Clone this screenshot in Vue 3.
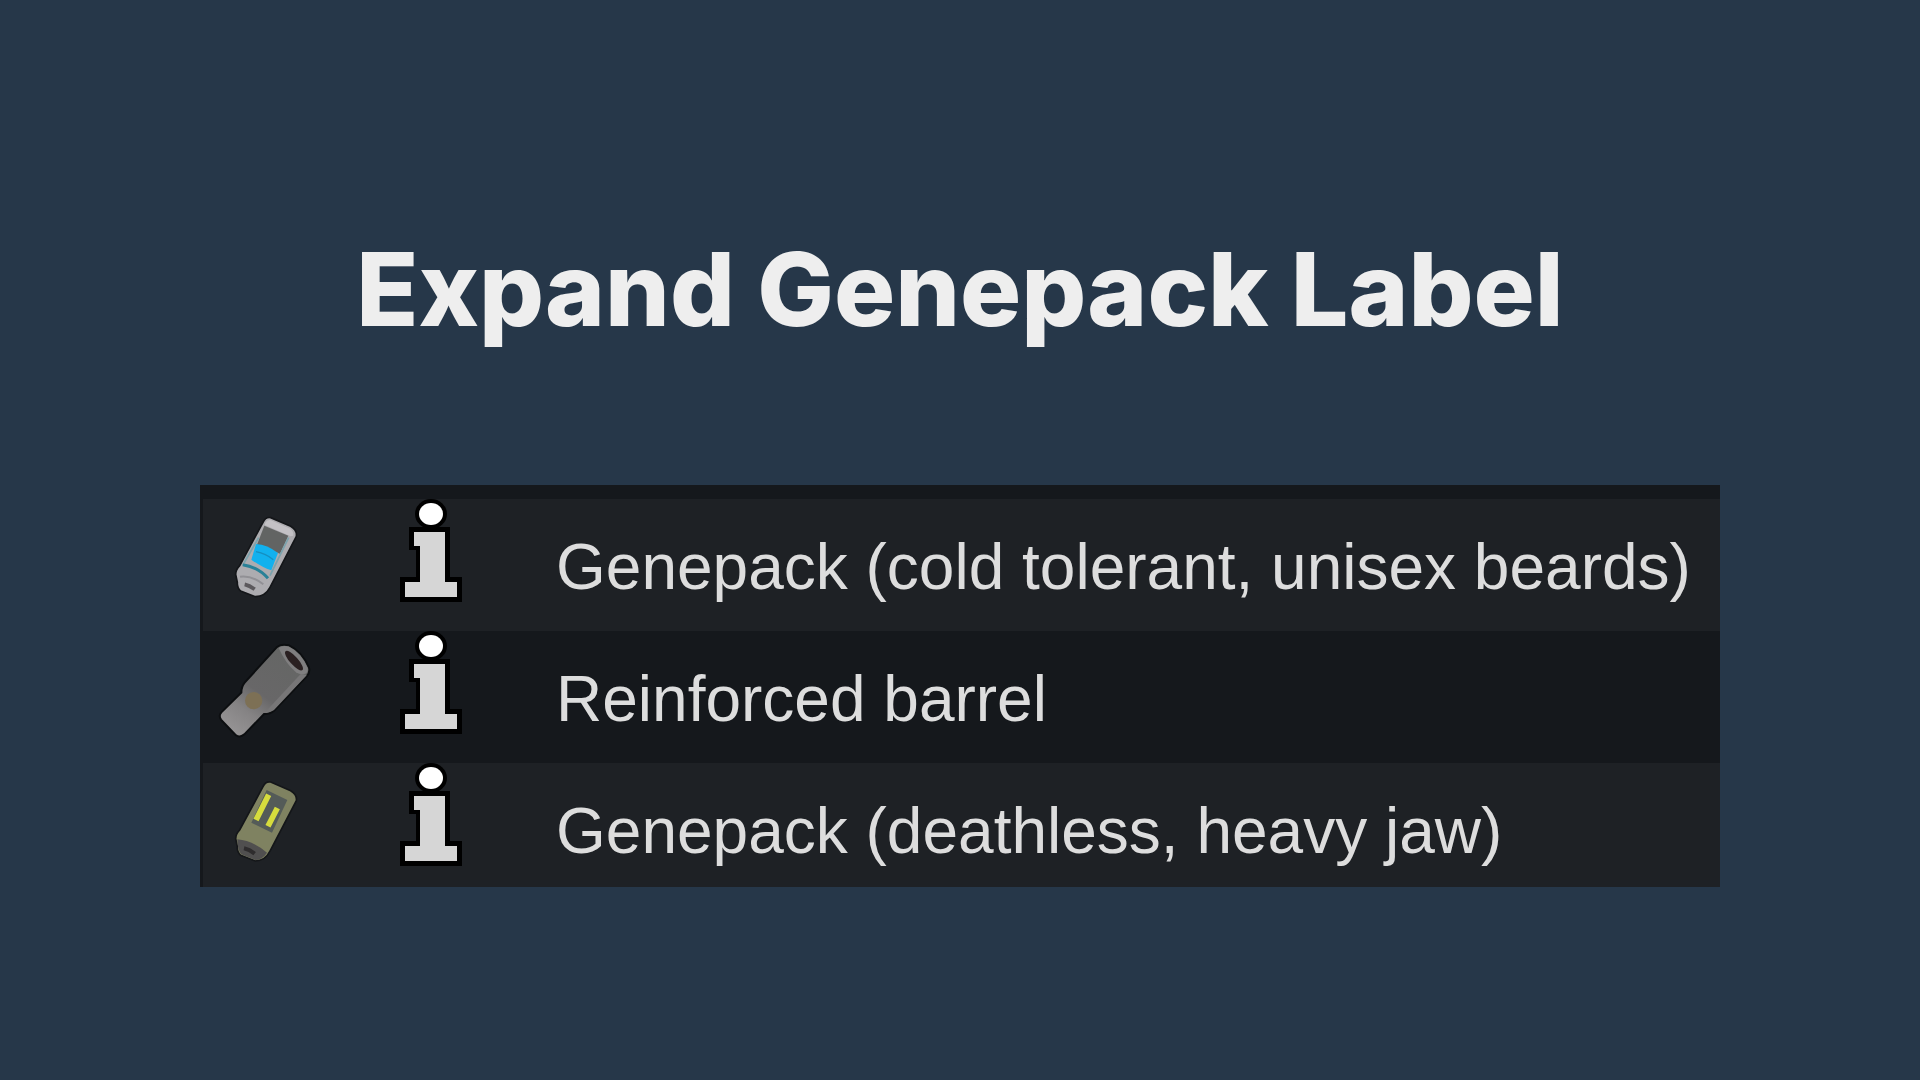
<template>
  <main class="page">
    <h1 class="title">Expand Genepack Label</h1>

    <ul class="items">
      <li v-for="item in items" :key="item.label" class="item">
        <svg v-if="item.icon === 'cold'" class="item-icon" viewBox="60 72 330 360" aria-hidden="true">
          <path d="M219 142Q227 125 242 128L302 154Q322 166 319 184L240 337Q226 364 196 365L152 348Q141 338 142 322L137 298Q137 284 149 272Z" fill="#adacb0" stroke="#141619" stroke-width="5" />
          <path d="M226 143Q232 133 243 136L298 160Q312 169 310 182L302 184L224 150Z" fill="#c3c1c5" />
          <path d="M223 152L295 182L270 236L201 209Z" fill="#626463" />
          <path d="M198 207Q232 209 264 234L244 286Q218 278 184 254Z" fill="#12b1ee" />
          <path d="M198 230Q228 236 250 254" fill="none" stroke="#168fc0" stroke-width="4" />
          <path d="M206 188L162 264M296 188L240 302" stroke="#7ba3ad" stroke-width="5" />
          <path d="M158 269Q204 276 234 310" fill="none" stroke="#2a8197" stroke-width="9" />
          <path d="M150 305Q184 300 220 328" fill="none" stroke="#919095" stroke-width="6" />
          <path d="M164 328Q178 331 194 343" fill="none" stroke="#5b585c" stroke-width="11" />
        </svg>
        <svg v-else-if="item.icon === 'barrel'" class="item-icon" viewBox="60 21 330 360" aria-hidden="true">
          <defs>
            <linearGradient id="barrel-body" x1="280" y1="90" x2="120" y2="310" gradientUnits="userSpaceOnUse">
              <stop offset="0" stop-color="#656665" />
              <stop offset="0.5" stop-color="#686768" />
              <stop offset="0.75" stop-color="#858384" />
              <stop offset="1" stop-color="#949293" />
            </linearGradient>
          </defs>
          <path d="M260 70Q273 58 297 64Q336 82 357 131Q361 145 350 157L252 260Q241 270 222 270L163 331Q150 343 136 332L93 287Q85 275 94 265L154 206Q154 188 164 176Z" fill="url(#barrel-body)" stroke="#0c0e10" stroke-width="6" />
          <path d="M332 150L350 154L252 258Q241 266 224 266Z" fill="#777677" />
          <path d="M266 72Q277 63 297 68Q334 86 353 132Q355 144 346 149Q332 154 318 145Q286 118 266 72Z" fill="#7f7e7f" />
          <ellipse cx="312" cy="110" rx="12" ry="38" fill="#2a2021" transform="rotate(-42 312 110)" />
          <circle cx="191" cy="230" r="26" fill="#7d7055" />
        </svg>
        <svg v-else class="item-icon" viewBox="60 27 330 360" aria-hidden="true">
          <path d="M219 98Q227 81 242 84L302 110Q322 122 319 140L240 291Q226 320 196 321L152 304Q141 294 142 278L137 254Q137 240 149 228Z" fill="#7f8261" stroke="#141619" stroke-width="5" />
          <path d="M230 108L292 138L246 236L184 206Z" fill="#545b58" />
          <path d="M236 122L198 198M262 162L234 217" stroke="#d6dc3d" stroke-width="17" />
          <path d="M142 256Q188 260 231 296Q216 318 196 318L154 301Q143 291 142 256Z" fill="#504f4f" />
          <path d="M162 283Q178 286 194 299" fill="none" stroke="#2e2c2d" stroke-width="12" />
        </svg>

        <button class="info" type="button" :aria-label="'Info: ' + item.label">
          <svg class="info-icon" viewBox="0 0 62 104" aria-hidden="true">
            <path d="M9 28H50V78H62V103H0V78H16V51H9Z" fill="#000" />
            <path d="M14 33H45V83H57V98H5V83H20V47H14Z" fill="#d6d6d6" />
            <ellipse cx="31" cy="15" rx="16" ry="15" fill="#000" />
            <ellipse cx="31" cy="15" rx="12" ry="11" fill="#fff" />
          </svg>
        </button>

        <span class="label">{{ item.label }}</span>
      </li>
    </ul>
  </main>
</template>

<script setup>
const items = [
  { icon: 'cold', label: 'Genepack (cold tolerant, unisex beards)' },
  { icon: 'barrel', label: 'Reinforced barrel' },
  { icon: 'deathless', label: 'Genepack (deathless, heavy jaw)' }
]
</script>

<style>
body {
  margin: 0;
  background: #263749;
}
</style>

<style scoped>
.page {
  display: flex;
  flex-direction: column;
  justify-content: center;
  gap: 100px;
  box-sizing: border-box;
  min-height: 100vh;
  padding: 0 200px;
}

.title {
  margin: 0;
  color: #eeeeee;
  font-family: Inter, sans-serif;
  font-size: 102px;
  font-weight: 800;
  line-height: 192px;
  text-align: center;
}

.items {
  margin: 0;
  padding: 14px 0 0 3px;
  list-style: none;
  background: #15181c;
}

.item {
  display: flex;
  align-items: flex-start;
  height: 132px;
  padding-left: 7px;
}

.item:nth-child(odd) {
  background: #1e2125;
}

/* the list is cut off at the bottom edge */
.item:last-child {
  height: 124px;
}

.item-icon {
  flex: none;
  width: 110px;
  height: 120px;
}

.info {
  flex: none;
  margin: 0 94px 0 80px;
  padding: 0;
  border: 0;
  background: none;
  cursor: pointer;
}

.info-icon {
  display: block;
  width: 62px;
  height: 104px;
}

.label {
  color: #dddddd;
  font-family: "Liberation Sans", Arial, sans-serif;
  font-size: 64px;
  line-height: 136px;
  white-space: nowrap;
}
</style>
